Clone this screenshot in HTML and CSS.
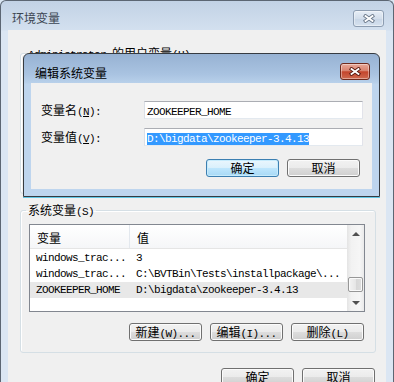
FILE: index.html
```html
<!DOCTYPE html>
<html lang="zh-CN">
<head>
  <meta charset="UTF-8" />
  <meta name="viewport" content="width=device-width, initial-scale=1.0" />
  <title>环境变量</title>
  <link rel="stylesheet" href="styles.css">
</head>
<body>
  <div class="window">
    <div class="titlebar">
      <span class="title">环境变量</span>
      <span class="close">
        <svg width="12" height="9" viewBox="0 0 12 9"><path d="M2.5 2L9.5 7M9.5 2L2.5 7" stroke="#6d7b8d" stroke-width="3.6" stroke-linecap="square"/><path d="M2.5 2L9.5 7M9.5 2L2.5 7" stroke="#fff" stroke-width="1.8" stroke-linecap="square"/></svg>
      </span>
    </div>
    <div class="client">
      <!-- user variables: mostly hidden under the edit dialog -->
      <fieldset class="group user">
        <legend><span class="m">Administrator </span>的用户变量<span class="m">(U)</span></legend>
        <div class="listview"></div>
      </fieldset>

      <fieldset class="group sys">
        <legend>系统变量<span class="m">(S)</span></legend>
        <div class="listview">
          <div class="lv-main">
            <div class="lv-head"><span>变量</span><span>值</span></div>
            <div class="lv-rows">
              <div class="lv-row"><span class="m">windows_trac...</span><span class="m">3</span></div>
              <div class="lv-row"><span class="m">windows_trac...</span><span class="m">C:\BVTBin\Tests\installpackage\...</span></div>
              <div class="lv-row sel"><span class="m">ZOOKEEPER_HOME</span><span class="m">D:\bigdata\zookeeper-3.4.13</span></div>
            </div>
          </div>
          <div class="scrollbar">
            <div class="sb-btn up"></div>
            <div class="sb-track"><div class="sb-thumb"></div></div>
            <div class="sb-btn down"></div>
          </div>
        </div>
        <div class="btn-row">
          <button class="btn">新建<span class="m">(W)...</span></button>
          <button class="btn">编辑<span class="m">(I)...</span></button>
          <button class="btn">删除<span class="m">(L)</span></button>
        </div>
      </fieldset>

      <div class="actions">
        <button class="btn">确定</button>
        <button class="btn">取消</button>
      </div>
    </div>

    <div class="dialog">
      <div class="titlebar">
        <span class="title">编辑系统变量</span>
        <span class="close active">
          <svg width="12" height="9" viewBox="0 0 12 9"><path d="M2.5 2L9.5 7M9.5 2L2.5 7" stroke="#5a1a10" stroke-width="3.6" stroke-linecap="square"/><path d="M2.5 2L9.5 7M9.5 2L2.5 7" stroke="#fff" stroke-width="1.8" stroke-linecap="square"/></svg>
        </span>
      </div>
      <div class="dlg-client">
        <div class="form">
          <label>变量名<span class="m">(<u>N</u>):</span></label>
          <div class="textbox"><span class="m">ZOOKEEPER_HOME</span></div>
          <label>变量值<span class="m">(<u>V</u>):</span></label>
          <div class="textbox"><span class="m sel">D:\bigdata\zookeeper-3.4.13</span></div>
        </div>
        <div class="btn-row">
          <button class="btn default">确定</button>
          <button class="btn">取消</button>
        </div>
      </div>
    </div>
  </div>
</body>
</html>
```

FILE: styles.css
```css
* {
  box-sizing: border-box;
}
html, body {
  margin: 0;
}
body {
  width: 394px;
  height: 382px;
  overflow: hidden;
  background: #dae6f3;
  color: #000;
  font: 12px/14px "Noto Sans CJK SC", "Liberation Sans", sans-serif;
}
.m {
  font-family: "Liberation Mono", monospace;
  font-size: 11px;
  line-height: 12px;
  letter-spacing: -0.6px;
}

/* outer window (inactive) */
.window {
  position: relative;
  height: 400px;
  border: 1px solid #5c6673;
  border-bottom: 0;
  border-radius: 6px 6px 0 0;
  padding: 0 7px;
  background: linear-gradient(#c2d2e5, #d3e0ef 29px, #dbe6f3 30px);
}
.titlebar {
  display: flex;
  align-items: flex-start;
  justify-content: space-between;
  height: 29px;
  margin: 0 -7px;
  padding: 0 9px 0 11px;
}
.title {
  margin-top: 10px;
  color: #3b4552;
}
.close {
  display: flex;
  align-items: center;
  justify-content: center;
  width: 31px;
  height: 17px;
  margin-top: 9px;
  border: 1px solid #8d9db1;
  border-radius: 3px;
  background: linear-gradient(#e7eef7, #d3deeb 50%, #c7d5e6 51%, #d6e2ef);
  box-shadow: inset 0 0 0 1px rgba(255, 255, 255, 0.4);
}
.close.active {
  width: 30px;
  border-color: #6f2a1d;
  background: linear-gradient(#e8a898, #d8826e 45%, #c4452c 52%, #cf6a50);
}

.client {
  height: 352px;
  background: #f0f0f0;
  padding: 16px 10px 0 12px;
}

/* group boxes */
.group {
  margin: 0;
  min-width: 0;
  padding: 7px 10px 11px 8px;
  border: 1px solid #d5dfe5;
  border-radius: 3px;
  box-shadow: inset 1px 1px 0 #fff;
}
.group legend {
  height: 14px;
  padding: 0 2px;
  margin-left: -3px;
  line-height: 14px;
}
.group.sys {
  margin-top: 9px;
}

/* list view */
.listview {
  display: flex;
  height: 88px;
  border: 1px solid #828790;
  background: #fff;
}
.user .listview {
  height: 115px;
}
.lv-main {
  flex: 1;
  min-width: 0;
}
.lv-head {
  display: flex;
  height: 24px;
  border-bottom: 1px solid #e5e5e5;
  background: linear-gradient(#fff, #f5f6f8);
}
.lv-head span {
  padding: 6px 0 0 7px;
}
.lv-head span:first-child {
  width: 100px;
  border-right: 1px solid #e3e8ee;
}
.lv-rows {
  padding-top: 1px;
}
.lv-row {
  display: flex;
  height: 16px;
  white-space: nowrap;
}
.lv-row span {
  line-height: 16px;
}
.lv-row span:first-child {
  width: 100px;
  padding-left: 6px;
}
.lv-row span + span {
  padding-left: 6px;
}
.lv-row.sel {
  background: #e8e8e8;
}

.scrollbar {
  display: flex;
  flex-direction: column;
  width: 17px;
  background: linear-gradient(90deg, #e4e4e4, #f2f2f2 25%, #f6f6f6 75%, #eaeaea);
}
.sb-btn {
  display: flex;
  align-items: center;
  justify-content: center;
  height: 17px;
}
.sb-btn::before {
  content: "";
  border-left: 4px solid transparent;
  border-right: 4px solid transparent;
}
.sb-btn.up::before {
  border-bottom: 4px solid #505050;
}
.sb-btn.down::before {
  border-top: 4px solid #505050;
}
.sb-track {
  flex: 1;
  display: flex;
  flex-direction: column;
  justify-content: flex-end;
  padding: 0 1px 2px;
}
.sb-thumb {
  height: 15px;
  border: 1px solid #979797;
  border-radius: 2px;
  background: linear-gradient(90deg, #f3f3f3, #e6e6e6 50%, #d6d6d6 51%, #dedede);
  box-shadow: inset 0 0 0 1px #fafafa;
}

/* buttons */
.btn-row, .actions {
  display: flex;
  justify-content: flex-end;
  gap: 8px;
}
.btn-row {
  margin-top: 11px;
  padding-right: 1px;
}
.actions {
  margin-top: 15px;
  margin-right: 1px;
}
.btn {
  width: 73px;
  height: 18px;
  padding: 0;
  border: 1px solid #707070;
  border-radius: 3px;
  background: linear-gradient(#f2f2f2, #ebebeb 50%, #dddddd 51%, #cfcfcf);
  box-shadow: inset 0 0 0 1px #fbfbfb;
  color: #000;
  font: inherit;
  line-height: 16px;
  text-align: center;
  white-space: nowrap;
}
.btn.default {
  border-color: #3c7fb1;
  background: linear-gradient(#eaf6fd, #d9f0fc 50%, #bee6fd 51%, #a7d9f5);
  box-shadow: inset 0 0 0 1px #c6ebfc;
}

/* edit dialog, floating over the window */
.dialog {
  position: absolute;
  left: 22px;
  top: 52px;
  width: 357px;
  height: 144px;
  padding: 0 7px 7px;
  border: 1px solid #363b41;
  border-radius: 6px 6px 0 0;
  background: linear-gradient(#97b2d3, #a9c3e1 20px, #b8d0ea 29px, #bed5ee 30px);
  box-shadow: 0 1px 0 #62c6e4;
}
.dialog .title {
  margin-top: 12px;
  color: #000;
}
.dlg-client {
  height: 106px;
  padding: 18px 12px 0 10px;
  background: #f0f0f0;
}
.form {
  display: grid;
  grid-template-columns: 103px 219px;
  row-gap: 9px;
  align-items: center;
}
.textbox {
  height: 18px;
  padding-left: 2px;
  border: 1px solid;
  border-color: #abadb3 #e2e3ea #e3e9ef #dbdfe6;
  background: #fff;
  line-height: 16px;
  white-space: nowrap;
}
.textbox .sel {
  background: #3399ff;
  color: #fff;
}
.dlg-client .btn-row {
  margin-top: 13px;
  padding-right: 0;
}
```
